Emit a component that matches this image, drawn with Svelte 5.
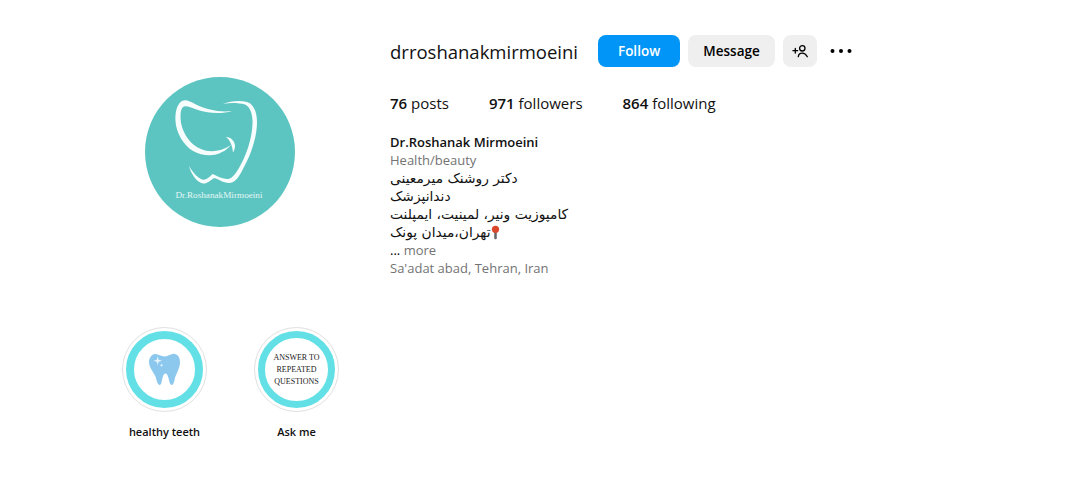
<script>
  const stats = [
    { n: '76', l: 'posts' },
    { n: '971', l: 'followers' },
    { n: '864', l: 'following' }
  ];
</script>

<div class="page">
  <header class="profile">
    <div class="avatar-col">
      <svg class="avatar" viewBox="0 0 150 150" role="img" aria-label="Dr.RoshanakMirmoeini logo">
        <circle cx="75" cy="75" r="75" fill="#5dc5c1" />
        <path class="w" d="M87 34C75 35.500 62 33 50 27C45 24.500 41 22 37 24C32 27 30 35 30.500 44C31 55 38 68 48 74C57 79 69 80 77 75C80 74 83 71 86 68C76 74.500 65 76 56 72C46 68 38.500 58 36 46C35 38 35.500 31 39 29.500C42 28.500 46 30.500 50 32C62 36.500 76 37.500 87 34Z" />
        <path class="w" d="M81 60C85 59.500 90 64 90 69C90 71 89.500 73 88 75.500C87.500 70 86 64 81 60Z" />
        <path class="w" d="M78 27C85 24 95 23 102 25C109 27 112 36 112 45C112 60 106 78 98 92C94 100 90 106 84 106C78 106 74 102 69 101C66 103 62 107 58 106.500C52 105.500 46 97 44 89C47 94 52 100.500 57 102.500C61 103.500 64 100.500 67.500 97C71 98.500 76 101.500 82 102C87 102.500 91 96 94 91C101 79 107 62 107.500 47C108 37 105 29.500 100 27.500C93 25.500 85 25.500 78 27Z" />
        <text class="logo-text" x="74" y="121" text-anchor="middle">Dr.RoshanakMirmoeini</text>
      </svg>
    </div>

    <section class="info">
      <div class="top">
        <h1>drroshanakmirmoeini</h1>
        <div class="actions">
          <button class="btn follow">Follow</button>
          <button class="btn message">Message</button>
          <button class="btn add" aria-label="Suggested accounts">
            <svg viewBox="0 0 16 16" width="16" height="16" fill="none" stroke="#000" stroke-width="1.300" stroke-linecap="round">
              <circle cx="10.300" cy="5.300" r="2.700" />
              <path d="M6.300 13.700c.2-2.200 1.700-3.500 4-3.500s3.800 1.300 5 3.500" />
              <path d="M1 7.700h4.600M3.300 5.400v4.600" />
            </svg>
          </button>
          <button class="more" aria-label="Options">
            <svg viewBox="0 0 24 6" width="24" height="6" fill="#000">
              <circle cx="3.500" cy="3" r="2" /><circle cx="12" cy="3" r="2" /><circle cx="20.500" cy="3" r="2" />
            </svg>
          </button>
        </div>
      </div>

      <ul class="stats">
        {#each stats as s}
          <li><b>{s.n}</b> {s.l}</li>
        {/each}
      </ul>

      <div class="bio">
        <div class="name">Dr.Roshanak Mirmoeini</div>
        <div class="muted">Health/beauty</div>
        <div class="fa" dir="rtl">دکتر روشنک میرمعینی</div>
        <div class="fa" dir="rtl">دندانپزشک</div>
        <div class="fa" dir="rtl">کامپوزیت ونیر، لمینیت، ایمپلنت</div>
        <div class="fa" dir="rtl"><svg class="pin" viewBox="0 0 10 16" width="9" height="15"><rect x="3.600" y="6" width="2.800" height="9.500" rx="1.200" fill="#666" /><circle cx="5" cy="4.500" r="4" fill="#d9482b" /></svg>تهران،میدان پونک</div>
        <div class="ell">... <span class="muted">more</span></div>
        <div class="muted">Sa'adat abad, Tehran, Iran</div>
      </div>
    </section>
  </header>

  <ul class="highlights">
    <li>
      <div class="ring">
        <div class="inner">
          <svg viewBox="0 0 32 34" width="31" height="33">
            <path d="M6 1C9 .5 12 3.500 16 3.500C20 3.500 23 .5 26 .8C30 1.500 32 5 32 9.500C32 15 28.500 21 27 25C26 29 25.500 33 23.500 33C21.500 33 21 29 20 25.500C19.400 23 18.500 21 17 21C15.500 21 14.500 23 14 25.500C13 29 13 33 11 33C9 33 8 29 7 25C5.500 21 0 15 0 9.500C0 4.500 3 1.500 6 1Z" fill="#8cc8ee" />
            <path d="M9 3.500L10 7L13.500 8L10 9L9 12.500L8 9L4.500 8L8 7Z" fill="#e6f4fc" />
            <path d="M13 10.500L13.500 12L15 12.500L13.500 13L13 14.500L12.500 13L11 12.500L12.500 12Z" fill="#e6f4fc" />
          </svg>
        </div>
      </div>
      <span>healthy teeth</span>
    </li>
    <li>
      <div class="ring">
        <div class="inner alt">
          <div class="q">ANSWER TO<br />REPEATED<br />QUESTIONS</div>
        </div>
      </div>
      <span>Ask me</span>
    </li>
  </ul>
</div>

<style>
  :global(body) {
    margin: 0;
    background: #fff;
  }
  .page {
    width: 1092px;
    height: 491px;
    overflow: hidden;
    box-sizing: border-box;
    font-family: "Open Sans", "DejaVu Sans", sans-serif;
    color: #000;
  }
  .profile {
    display: flex;
    padding: 30px 0 0 145px;
    height: 296px;
    box-sizing: border-box;
  }
  .avatar-col {
    width: 245px;
    padding-top: 47px;
  }
  .avatar {
    display: block;
    width: 150px;
    height: 150px;
  }
  .w {
    fill: #f7fdfc;
  }
  .logo-text {
    font-family: "Liberation Serif", serif;
    font-size: 9.200px;
    fill: #e4f6f4;
  }
  .info {
    display: flex;
    flex-direction: column;
  }
  .top {
    display: flex;
    align-items: center;
    height: 42px;
  }
  h1 {
    margin: 0 20px 0 0;
    font-size: 18.500px;
    font-weight: 400;
    color: #111;
  }
  .actions {
    display: flex;
    align-items: center;
    gap: 8px;
  }
  .btn {
    border: 0;
    height: 32px;
    border-radius: 8px;
    font: 600 13.500px "Open Sans", sans-serif;
    padding: 0;
  }
  .follow {
    width: 82px;
    background: #0095f6;
    color: #fff;
  }
  .message {
    width: 87px;
    background: #efefef;
    color: #000;
  }
  .add {
    width: 34px;
    background: #efefef;
    display: flex;
    align-items: center;
    justify-content: center;
  }
  .more {
    border: 0;
    background: none;
    padding: 0;
    margin-left: 4px;
    width: 24px;
    height: 24px;
    display: flex;
    align-items: center;
    justify-content: center;
  }
  .stats {
    display: flex;
    gap: 40px;
    list-style: none;
    margin: 0;
    padding: 0;
    margin-top: 19px;
    font-size: 15px;
    line-height: 24px;
    color: #111;
  }
  .stats b {
    font-weight: 600;
  }
  .bio {
    margin-top: 18px;
    font-size: 13px;
    line-height: 18px;
  }
  .name {
    font-weight: 600;
    color: #111;
  }
  .muted {
    color: #737373;
  }
  .fa {
    text-align: left;
    width: max-content;
    height: 18px;
    font-family: "DejaVu Sans", sans-serif;
    font-size: 13.800px;
    color: #111;
  }
  .pin {
    vertical-align: -3px;
  }
  .highlights {
    display: flex;
    gap: 47px;
    list-style: none;
    margin: 0;
    padding: 31px 0 0 122px;
  }
  .highlights li {
    width: 85px;
    display: flex;
    flex-direction: column;
    align-items: center;
    gap: 12px;
    font-size: 11px;
    font-weight: 600;
    color: #111;
    white-space: nowrap;
  }
  .ring {
    width: 85px;
    height: 85px;
    box-sizing: border-box;
    border-radius: 50%;
    border: 1px solid #e0e0e0;
    display: flex;
    align-items: center;
    justify-content: center;
  }
  .inner {
    width: 77px;
    height: 77px;
    box-sizing: border-box;
    border-radius: 50%;
    border: 8px solid #63e0e6;
    display: flex;
    align-items: center;
    justify-content: center;
  }
  .alt {
    border-width: 7px;
  }
  .q {
    font-family: "Liberation Serif", serif;
    font-size: 8px;
    font-weight: 400;
    line-height: 12px;
    text-align: center;
    color: #222;
  }
</style>
